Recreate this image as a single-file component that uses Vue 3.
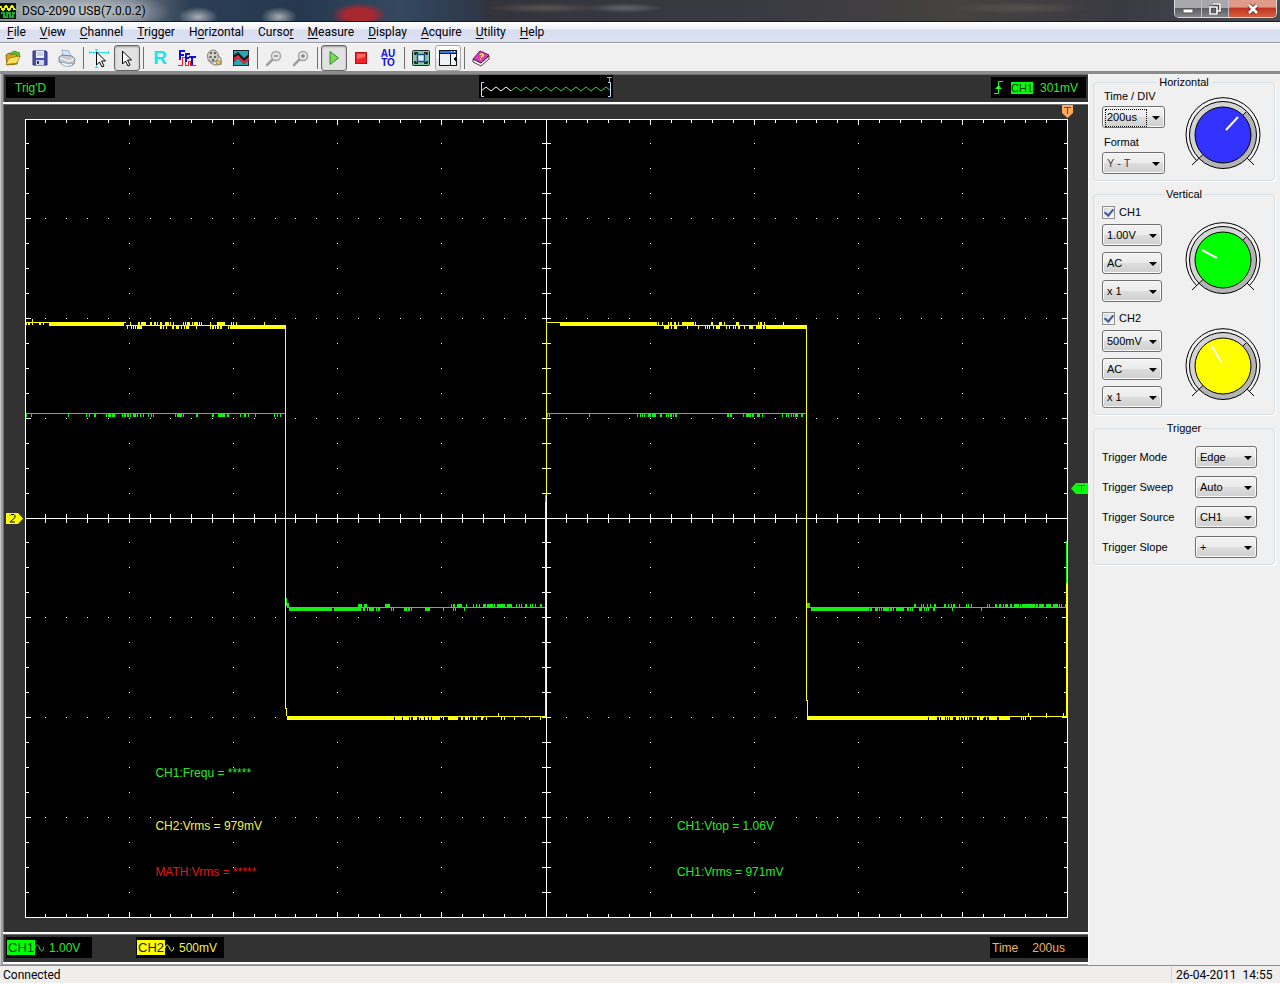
<script setup>
import { ref } from 'vue'

const menus = [
  ['', 'F', 'ile'], ['', 'V', 'iew'], ['', 'C', 'hannel'], ['', 'T', 'rigger'],
  ['H', 'o', 'rizontal'], ['Curso', 'r', ''], ['', 'M', 'easure'], ['', 'D', 'isplay'],
  ['', 'A', 'cquire'], ['', 'U', 'tility'], ['', 'H', 'elp'],
]

const horizontal = [
  { id: 'time-div', label: 'Time / DIV', value: '200us', focused: true },
  { id: 'format', label: 'Format', value: 'Y - T', muted: true },
]
const channels = ref([
  { name: 'CH1', on: true, settings: ['1.00V', 'AC', 'x 1'] },
  { name: 'CH2', on: true, settings: ['500mV', 'AC', 'x 1'] },
])
const settingNames = ['scale', 'coupling', 'probe']
const trigger = [
  { id: 'trigger-mode', label: 'Trigger Mode', value: 'Edge' },
  { id: 'trigger-sweep', label: 'Trigger Sweep', value: 'Auto' },
  { id: 'trigger-source', label: 'Trigger Source', value: 'CH1' },
  { id: 'trigger-slope', label: 'Trigger Slope', value: '+' },
]
const knobs = {
  time: { fill: '#3333ff', hand: 'M3 -5L15 -18' },
  ch1: { fill: '#00ff00', hand: 'M-21 -10L-6 -2' },
  ch2: { fill: '#ffff00', hand: 'M-11 -20L-2 -4' },
}

// Plot area: ten divisions across, eight down.
const X0 = 25, Y0 = 119, W = 1042, H = 798
const box = (x, y, w, h) => `M${x} ${y}h${w}v${h}h${-w}z`
const gx = (i) => Math.floor(X0 + (W * i) / 50)
const gy = (i) => Math.floor(Y0 + (H * i) / 32)

function graticule() {
  let d = box(X0, Y0, W + 1, 1) + box(X0, Y0 + H, W + 1, 1) + box(X0, Y0, 1, H + 1) + box(X0 + W, Y0, 1, H + 1)
  d += box(X0, 518, W, 1) + box(546, Y0, 1, H)
  for (let i = 1; i < 50; i++) {
    const n = i % 5 ? 4 : 6
    d += box(gx(i), Y0, 1, n) + box(gx(i), Y0 + H - n + 1, 1, n) + box(gx(i), 514, 1, 9)
    for (let j = 4; j < 32; j += 4) d += box(gx(i), gy(j), 1, 1)
  }
  for (let j = 1; j < 32; j++) {
    const n = j % 4 ? 4 : 6
    d += box(X0, gy(j), n, 1) + box(X0 + W - n + 1, gy(j), n, 1) + box(542, gy(j), 9, 1)
    for (let i = 5; i < 50; i += 5) d += box(gx(i), gy(j), 1, 1)
  }
  return d
}

// Quantisation noise: [from, to, density] runs of one-sample spikes.
let seed = 7
const rnd = () => (seed = (seed * 16807) % 2147483647) / 2147483647
const noise = (y, runs, h = 3) => {
  let d = ''
  for (const [a, b, p] of runs) {
    if (p === 1) { d += box(a, y, b - a, h + 1); continue }
    for (let x = a; x < b; x++) if (rnd() < p) d += box(x, y, 1, h)
  }
  return d
}

const yellow =
  box(26, 322, 100, 1) + noise(323, [[26, 29, 0.8], [29, 44, 0.4]], 2) + noise(322, [[49, 124, 1]]) + box(32, 319, 1, 3) +
  box(126, 325, 159, 1) + noise(322, [[126, 158, 0.45], [160, 202, 0.42], [208, 216, 0.4], [217, 225, 0.85], [228, 237, 0.25]]) +
  noise(326, [[126, 133, 0.25], [133, 143, 0.6], [157, 190, 0.45], [190, 208, 0.15], [208, 230, 0.5]]) + noise(325, [[230, 286, 1]]) + box(264, 322, 1, 3) +
  box(285, 325, 1, 384) + box(286, 708, 1, 8) + box(287, 716, 258, 1) + noise(716, [[287, 392, 1]]) +
  noise(717, [[392, 408, 0.8], [408, 450, 0.6], [450, 470, 0.8], [470, 488, 0.55], [488, 545, 0.08]]) + box(498, 713, 1, 3) +
  box(546, 322, 1, 174) + box(545, 502, 1, 215) + box(546, 322, 14, 1) + noise(322, [[560, 657, 1]]) +
  box(656, 325, 150, 1) + noise(322, [[657, 676, 0.5], [678, 697, 0.6], [700, 726, 0.25], [736, 740, 0.4], [757, 766, 0.55]]) + box(783, 322, 1, 3) +
  noise(326, [[664, 677, 0.75], [687, 690, 0.3], [697, 717, 0.6], [717, 767, 0.45]]) + noise(325, [[767, 807, 1]]) +
  box(806, 325, 1, 376) + box(807, 700, 1, 16) + box(807, 716, 260, 1) + noise(716, [[807, 926, 1]]) +
  noise(717, [[926, 945, 0.75], [945, 990, 0.6], [990, 1010, 0.75], [1010, 1035, 0.15]]) +
  box(1028, 713, 1, 3) + box(1046, 713, 1, 3) + box(1063, 713, 1, 3) + box(1066, 583, 1, 134)

const green =
  box(26, 413, 260, 1) + noise(414, [[26, 32, 0.7], [68, 69, 0.9], [86, 96, 0.3], [106, 117, 0.7], [120, 138, 0.55], [138, 160, 0.2], [175, 184, 0.5], [196, 198, 0.7], [211, 231, 0.65], [239, 247, 0.7], [248, 256, 0.3], [274, 285, 0.3]]) +
  box(285, 598, 2, 8) + box(287, 603, 2, 5) + box(287, 607, 258, 1) + noise(607, [[289, 332, 1]]) +
  noise(608, [[332, 364, 0.85], [364, 380, 0.4], [386, 397, 0.2], [404, 416, 0.6], [424, 430, 0.5], [436, 470, 0.08]]) +
  noise(604, [[352, 367, 0.25], [377, 390, 0.55], [412, 416, 0.3], [451, 464, 0.6], [464, 480, 0.1], [482, 505, 0.85], [505, 536, 0.45], [540, 545, 0.3]]) +
  box(545, 495, 1, 7) + box(547, 413, 259, 1) +
  noise(414, [[547, 550, 0.9], [588, 590, 0.6], [630, 648, 0.25], [648, 656, 0.8], [660, 678, 0.3], [715, 717, 0.4], [727, 735, 0.5], [742, 764, 0.65], [776, 804, 0.35]]) +
  box(806, 596, 1, 12) + box(807, 603, 3, 5) + box(807, 607, 259, 1) + noise(607, [[811, 868, 1]]) +
  noise(608, [[868, 892, 0.85], [892, 914, 0.5], [918, 937, 0.45], [950, 985, 0.1]]) +
  noise(604, [[914, 938, 0.45], [944, 974, 0.35], [986, 1005, 0.5], [1005, 1048, 0.85], [1048, 1066, 0.6]]) +
  box(1066, 541, 1, 42)

const grid = graticule()

const previewWave = (from, to) => {
  let d = ''
  for (let i = from; i <= to; i++) d += `${i === from ? 'M' : 'L'}${2 + i * 5} ${i % 2 ? 12 : 16}`
  return d
}

const readings = [
  { text: 'CH1:Frequ = *****', tone: 'green' }, null,
  { text: 'CH2:Vrms = 979mV', tone: 'yellow' }, { text: 'CH1:Vtop = 1.06V', tone: 'green' },
  { text: 'MATH:Vrms = *****', tone: 'red' }, { text: 'CH1:Vrms = 971mV', tone: 'green' },
]
</script>

<template>
  <div class="window">
    <header class="titlebar">
      <svg class="app-icon" width="16" height="16" viewBox="0 0 16 16" shape-rendering="crispEdges" aria-hidden="true">
        <rect width="16" height="16" fill="#0a1a08" />
        <path d="M0 3L3 7L6 3L9 7L12 3L15 7" fill="none" stroke="#f4f000" stroke-width="2" />
        <path d="M1 10h3v4h3v-4h3v4h3v-4h2" fill="none" stroke="#12a83a" stroke-width="2" />
      </svg>
      <h1>DSO-2090 USB(7.0.0.2)</h1>
      <div class="win-buttons">
        <button class="min" aria-label="Minimize">
          <svg width="12" height="12" viewBox="0 0 12 12"><rect x="1" y="6" width="10" height="4" fill="#fff" stroke="#555" /></svg>
        </button>
        <button class="max" aria-label="Restore">
          <svg width="12" height="12" viewBox="0 0 12 12"><path d="M4 1h7v7h-3M1 4h7v7h-7z" fill="none" stroke="#444" stroke-width="3" /><path d="M4 1h7v7h-3M1 4h7v7h-7z" fill="none" stroke="#fff" stroke-width="1.6" /></svg>
        </button>
        <button class="close" aria-label="Close">
          <svg width="12" height="12" viewBox="0 0 12 12"><path d="M2 2L10 10M10 2L2 10" stroke="#5a2a24" stroke-width="4.4" /><path d="M2 2L10 10M10 2L2 10" stroke="#fff" stroke-width="2.8" /></svg>
        </button>
      </div>
    </header>

    <nav class="menubar">
      <button v-for="m in menus" :key="m.join('')">{{ m[0] }}<u>{{ m[1] }}</u>{{ m[2] }}</button>
    </nav>

    <div class="toolbar" role="toolbar">
      <button aria-label="Open">
        <svg width="18" height="18" viewBox="0 0 18 18"><path d="M2 6l3-2 3 1 5-1 1 3-1 8-10 1z" fill="#d8a520" stroke="#8a6a10" /><path d="M6 5c2-3 6-4 8-1l1-1 1 5-4-1 1-1c-2-2-4-1-6 0z" fill="#5cc832" stroke="#2d7a18" stroke-width=".7" /><path d="M2 15.500L5 9l11-2-3 7z" fill="#ffe25a" stroke="#9a7812" stroke-width=".8" /></svg>
      </button>
      <button aria-label="Save">
        <svg width="18" height="18" viewBox="0 0 18 18"><path d="M2 2h13l1 1v13h-14z" fill="#4a4fa8" stroke="#2e327c" /><rect x="5" y="2" width="8" height="7" fill="#eef0fa" /><path d="M6 4h6M6 6h6" stroke="#a8acd0" /><rect x="5" y="11" width="8" height="5" fill="#d4d6ea" /><rect x="6" y="12" width="2" height="3" fill="#34387c" /></svg>
      </button>
      <button aria-label="Print">
        <svg width="18" height="18" viewBox="0 0 18 18"><path d="M5 7L4 1l7 1 2 6z" fill="#d4e8fa" stroke="#86a4c4" stroke-width=".8" /><path d="M1 8l3-2 10 1 3 3-1 5-5 2-10-4z" fill="#c8ccd2" stroke="#6c7078" stroke-width=".8" /><path d="M2 9l9 3 5-2" fill="none" stroke="#fff" /><path d="M4 13l7 2 3-1 1 2-6 2-6-3z" fill="#f4f8fc" stroke="#6c88a8" stroke-width=".7" /></svg>
      </button>
      <i class="sep"></i>
      <button aria-label="Cursor cross">
        <svg width="22" height="20" viewBox="0 0 22 20"><path d="M0 4.500H20M7.500 1V20M.5 3v3M19.500 3v3M6 1.500h3M6 19.500h3" stroke="#28e0e8" /><path d="M7.500 4v13l3-3 2.500 5 2-1-2.500-5h4z" fill="#fff" stroke="#000" /></svg>
      </button>
      <button class="pressed" aria-label="Pointer">
        <svg width="18" height="20" viewBox="0 0 18 20"><path d="M4.500 3v13l3-3 2.500 5 2-1-2.500-5h4z" fill="#fff" stroke="#000" /></svg>
      </button>
      <i class="sep"></i>
      <button class="glyph-r" aria-label="Reference">R</button>
      <button aria-label="FFT">
        <svg width="18" height="18" viewBox="0 0 18 18" shape-rendering="crispEdges"><path d="M0 16.500h4v-8h3v8h3v-4h2v4h6" fill="none" stroke="#f02020" /><path d="M2 11V2h5M2 6h4M8 13V5h4M8 9h3M11 8h7M14 8v8" fill="none" stroke="#1010d8" stroke-width="2" /></svg>
      </button>
      <button aria-label="Record">
        <svg width="18" height="18" viewBox="0 0 18 18"><ellipse cx="8" cy="7" rx="5.500" ry="6" fill="#d8d8d0" stroke="#808078" /><g fill="#686860"><circle cx="6" cy="4" r="1.300" /><circle cx="10" cy="4" r="1.300" /><circle cx="5.500" cy="8" r="1.300" /><circle cx="10" cy="8" r="1.300" /><circle cx="8" cy="11" r="1.300" /></g><path d="M12 6c4 2 5 6 4 9l-6 1c-3-1-6-3-7-6" fill="none" stroke="#a09c88" stroke-width="1.500" /><ellipse cx="13.500" cy="13.500" rx="2.500" ry="2" fill="#e8c460" stroke="#806828" stroke-width=".6" /></svg>
      </button>
      <button aria-label="Pass or fail">
        <svg width="18" height="18" viewBox="0 0 18 18"><rect x="1.500" y="1.500" width="15" height="15" fill="#28a8b0" stroke="#182830" /><path d="M2 6l4-3 6 6 5-4v6l-5 4-6-6-4 4z" fill="#14181c" /><path d="M2 9l4-3 6 6 5-4v3l-5 4-6-6-4 3z" fill="#e82840" /></svg>
      </button>
      <i class="sep"></i>
      <button aria-label="Zoom out">
        <svg width="18" height="18" viewBox="0 0 18 18"><path d="M8 10L2 16" stroke="#a0a0a0" stroke-width="2.500" stroke-linecap="round" /><circle cx="11" cy="7" r="4.500" fill="#e8e8e8" stroke="#a4a4a4" stroke-width="1.500" /><path d="M9 7h4" stroke="#808080" stroke-width="1.400" /></svg>
      </button>
      <button aria-label="Zoom in">
        <svg width="18" height="18" viewBox="0 0 18 18"><path d="M8 10L2 16" stroke="#a0a0a0" stroke-width="2.500" stroke-linecap="round" /><circle cx="11" cy="7" r="4.500" fill="#e8e8e8" stroke="#a4a4a4" stroke-width="1.500" /><path d="M9 7h4M11 5v4" stroke="#808080" stroke-width="1.400" /></svg>
      </button>
      <i class="sep"></i>
      <button class="pressed" aria-label="Start">
        <svg width="18" height="18" viewBox="0 0 18 18"><path d="M5 2.500L13.500 9L5 15.500z" fill="#7cd860" stroke="#2c8c20" /></svg>
      </button>
      <button aria-label="Stop">
        <svg width="18" height="18" viewBox="0 0 18 18"><rect x="3.500" y="3.500" width="11" height="11" fill="#f02424" stroke="#b81010" /><path d="M5 5h8v3l-8 2z" fill="#ff6a60" /></svg>
      </button>
      <button class="glyph-auto" aria-label="Auto set"><span>AU</span><span>TO</span></button>
      <i class="sep"></i>
      <button aria-label="Full screen">
        <svg width="18" height="18" viewBox="0 0 18 18"><rect x=".5" y="1.500" width="17" height="15" rx="1" fill="#88c4a8" stroke="#182c28" /><path d="M3 6V4h3M12 4h3v2M15 12v2h-3M6 14H3v-2" fill="none" stroke="#000" stroke-width="1.400" /><rect x="5.500" y="5.500" width="7" height="7" fill="#d8f0ff" stroke="#1c4c8c" stroke-width="1.500" /></svg>
      </button>
      <button class="framed" aria-label="Side panel">
        <svg width="18" height="18" viewBox="0 0 18 18" shape-rendering="crispEdges"><rect x="0" y="1" width="18" height="16" fill="#10181c" /><rect x="1" y="2" width="16" height="2" fill="#3878e0" /><path d="M12 2h1v1h-1zM15 2h1v1h-1z" fill="#fff" /><path d="M1 5h10v11h-10zM12 5h5v11h-5z" fill="#f0f2f6" /><path d="M17 7v6l-3-3z" fill="#000" /></svg>
      </button>
      <i class="sep"></i>
      <button aria-label="Help">
        <svg width="18" height="18" viewBox="0 0 18 18"><path d="M1 10l8 4 8-7v3l-8 7-8-4z" fill="#fff" stroke="#501838" stroke-width=".9" /><path d="M1 10L8 2l9 4-8 8z" fill="#d83cc0" stroke="#601450" /><path d="M8 6c1-2 4-1 3 1l-2 1M8 10h1" fill="none" stroke="#ffe840" stroke-width="1.400" /></svg>
      </button>
    </div>

    <div class="body">
      <main class="scope">
        <section class="strip top">
          <div><span class="lcd state">Trig'D</span></div>
          <svg class="preview" width="134" height="23" viewBox="0 0 134 23">
            <rect width="134" height="23" fill="#000" />
            <path :d="previewWave(0, 6)" fill="none" stroke="#fff" />
            <path :d="previewWave(6, 26)" fill="none" stroke="#2fd04f" />
            <path d="M5 7.500H2.500V21.500H5M129 7.500H131.500V21.500H129" fill="none" stroke="#c4d8ff" />
            <path d="M128 2.500h5M130.500 2v5" stroke="#e09a60" />
          </svg>
          <div class="right">
            <span class="lcd level">
              <svg width="10" height="15" viewBox="0 0 10 15"><path d="M0 13.500H4.500V1.500H9" fill="none" stroke="#20ff20" /><path d="M1 9L4.500 5L8 9z" fill="#20ff20" /></svg>
              <b class="tag small">CH1</b>
              <span>301mV</span>
            </span>
          </div>
        </section>

        <section class="plot">
          <svg class="screen" viewBox="25 119 1043 799" preserveAspectRatio="none" shape-rendering="crispEdges" role="img" aria-label="Waveforms">
            <rect x="25" y="119" width="1043" height="799" fill="#000" />
            <path :d="grid" fill="#fff" />
            <path :d="green" fill="#12f012" />
            <path :d="yellow" fill="#ffff10" />
          </svg>
          <div class="readings">
            <template v-for="(r, i) in readings" :key="i">
              <span v-if="r" :class="r.tone">{{ r.text }}</span><span v-else></span>
            </template>
          </div>
          <div class="marker pos"><svg width="12" height="13" viewBox="0 0 12 13"><path d="M0 0h11v8l-5.500 5L0 8z" fill="#ffa860" /><path d="M2 2.500h7M5.500 2v7" stroke="#7a4420" /></svg></div>
          <div class="marker ground"><svg width="17" height="11" viewBox="0 0 17 11"><path d="M0 0h12l5 5.500L12 11H0z" fill="#ffff00" /><path d="M4 2.500l1-1h3l1 1v2l-5 4.500h5" fill="none" stroke="#000" /></svg></div>
          <div class="marker trig"><svg width="17" height="11" viewBox="0 0 17 11"><path d="M17 0H5L0 5.500L5 11h12z" fill="#00ff00" /><path d="M7 2.500h7M10.500 2v7" stroke="#106010" /></svg></div>
        </section>

        <section class="strip bottom">
          <span class="lcd ch one">
            <b class="tag">CH1</b>
            <svg width="9" height="10" viewBox="0 0 9 10"><path d="M0 5C1 1 3 1 4.500 5S8 9 9 4" fill="none" stroke="#30f030" /></svg>
            <span>1.00V</span>
          </span>
          <span class="lcd ch two">
            <b class="tag yellow-tag">CH2</b>
            <svg width="9" height="10" viewBox="0 0 9 10"><path d="M0 5C1 1 3 1 4.500 5S8 9 9 4" fill="none" stroke="#f8f870" /></svg>
            <span>500mV</span>
          </span>
          <span class="lcd time"><span>Time</span><span>200us</span></span>
        </section>
      </main>

      <aside class="panel">
        <fieldset>
          <legend>Horizontal</legend>
          <div class="split">
            <div class="stack timebase">
              <template v-for="h in horizontal" :key="h.id">
                <label :for="h.id">{{ h.label }}</label>
                <span class="combo" :class="{ focused: h.focused, muted: h.muted }"><select :id="h.id"><option>{{ h.value }}</option></select></span>
              </template>
            </div>
            <div class="knob-cell">
              <svg class="knob" width="76" height="76" viewBox="-38 -38 76 76">
                <path d="M-26 26A37 37 0 1 1 26 26" fill="none" stroke="#000" />
                <circle r="33.500" fill="#b4b4b4" /><path d="M-23.700 23.700A33.500 33.500 0 0 1 23.700 -23.700z" fill="#d4d4d4" />
                <circle r="33.500" fill="none" stroke="#000" />
                <path d="M-31 30L-20 19.500M24 23L31 30M20 -20L23 -23" stroke="#000" />
                <circle r="28" :fill="knobs.time.fill" stroke="#000" /><path :d="knobs.time.hand" stroke="#fff" stroke-width="2" />
              </svg>
            </div>
          </div>
        </fieldset>

        <fieldset>
          <legend>Vertical</legend>
          <div v-for="(c, i) in channels" :key="c.name" class="split channel">
            <div class="stack">
              <label class="check"><input v-model="c.on" type="checkbox" /><span>{{ c.name }}</span></label>
              <span v-for="(s, k) in c.settings" :key="k" class="combo"><select :aria-label="c.name + ' ' + settingNames[k]"><option>{{ s }}</option></select></span>
            </div>
            <div class="knob-cell">
              <svg class="knob" width="76" height="76" viewBox="-38 -38 76 76">
                <path d="M-26 26A37 37 0 1 1 26 26" fill="none" stroke="#000" />
                <circle r="33.500" fill="#b4b4b4" /><path d="M-23.700 23.700A33.500 33.500 0 0 1 23.700 -23.700z" fill="#d4d4d4" />
                <circle r="33.500" fill="none" stroke="#000" />
                <path d="M-31 30L-20 19.500M24 23L31 30M20 -20L23 -23" stroke="#000" />
                <circle r="28" :fill="i ? knobs.ch2.fill : knobs.ch1.fill" stroke="#000" /><path :d="i ? knobs.ch2.hand : knobs.ch1.hand" stroke="#fff" stroke-width="2" />
              </svg>
            </div>
          </div>
        </fieldset>

        <fieldset>
          <legend>Trigger</legend>
          <div class="rows">
            <div v-for="t in trigger" :key="t.id" class="row">
              <label :for="t.id">{{ t.label }}</label>
              <span class="combo"><select :id="t.id"><option>{{ t.value }}</option></select></span>
            </div>
          </div>
        </fieldset>
      </aside>
    </div>

    <footer class="status">
      <span>Connected</span>
      <time>26-04-2011&nbsp; 14:55</time>
    </footer>
  </div>
</template>

<style>
body { margin: 0; background: #f0f0f0; }
</style>

<style scoped>
* { box-sizing: border-box; }
.window {
  display: flex; flex-direction: column; min-height: 100vh;
  font: 12px/16px Roboto, "Noto Sans", sans-serif; color: #000; background: #f0f0f0;
}
button { font: inherit; color: inherit; border: 0; background: none; padding: 0; }
svg { display: block; }

.titlebar {
  display: flex; align-items: center; height: 22px; border-bottom: 1px solid #16181e; overflow: hidden;
  background:
    radial-gradient(ellipse 90px 22px at 80px 12px, rgba(190, 196, 200, .95), rgba(160, 168, 176, .7) 60%, transparent),
    radial-gradient(ellipse 20px 10px at 198px 17px, #aab0b8, transparent),
    radial-gradient(ellipse 18px 10px at 279px 17px, #a8acb0, transparent),
    radial-gradient(ellipse 28px 12px at 359px 15px, #a82830 50%, transparent),
    radial-gradient(ellipse 60px 5px at 545px 8px, #5a5450, transparent),
    radial-gradient(ellipse 40px 5px at 625px 8px, #62646c, transparent),
    radial-gradient(ellipse 70px 6px at 1020px 8px, #565250, transparent),
    linear-gradient(90deg, #8a949c 0, #6c7884 130px, #2c3e54 190px, #25384e 300px, #34485e 400px, #2e3a4c 470px, #33333b 490px, #3a3a42 760px, #45423f 960px, #3a3a42 1120px, #4a4c54);
}
.titlebar h1 { flex: 1; margin: 0 0 0 6px; font-size: 12px; font-weight: 400; line-height: 16px; text-shadow: 0 0 6px #dfe3e6; }
.win-buttons { display: flex; align-self: flex-start; margin-right: 3px; height: 18px; border: 1px solid #d8d8dc; border-top: 0; border-radius: 0 0 5px 5px; overflow: hidden; }
.win-buttons button { display: flex; align-items: center; justify-content: center; width: 27px; border-right: 1px solid #c0c0c4; background: linear-gradient(#a8a8ac 45%, #5c5c62 50%, #84848a); }
.win-buttons .close { width: 47px; border-right: 0; background: linear-gradient(#e09a8a 40%, #c03420 50%, #d8603c); }

.menubar { display: flex; align-items: center; gap: 14px; height: 21px; padding: 0 0 0 7px; border-bottom: 1px solid #9a9aa4; background: linear-gradient(#fff 0, #eef0f8 35%, #d8def0 40%, #dde2f4); }
.menubar u { text-underline-offset: 2px; }

.toolbar { display: flex; align-items: center; gap: 1px; height: 29px; border-top: 1px solid #fff; border-bottom: 1px solid #8c8c8c; background: #f0f0f0; }
.toolbar button { display: flex; align-items: center; justify-content: center; width: 26px; height: 26px; border: 1px solid transparent; border-radius: 3px; }
.toolbar .pressed { border-color: #686868; background: #e2e2e2; box-shadow: inset 0 1px 2px #999; }
.toolbar .framed { border-color: #a8a8a8; background: linear-gradient(#fcfcfc 50%, #e8e8e8 50%); }
.toolbar .sep { width: 5px; height: 22px; background: linear-gradient(#707070, #707070) center / 1px 100% no-repeat; }
.toolbar .glyph-r { color: #10e8f0; font: 700 19px/20px "Liberation Sans", Arial, sans-serif; }
.toolbar .glyph-auto { flex-direction: column; color: #1010d8; font: 700 10px/9px "Liberation Sans", Arial, sans-serif; }

.body { display: flex; flex: 1; border-top: 2px solid #8c8c8c; }
.scope { flex: 1; min-width: 0; display: flex; flex-direction: column; padding: 0 0 1px 2px; border-left: 1px solid #c8c8c8; background: #a0a0a0; font: 12px/16px "Liberation Sans", Arial, sans-serif; }
.strip { border: solid #6c6c6c; border-width: 1px 0 0 1px; background: #323232; box-shadow: 0 2px #fff; height: 28px; margin-bottom: 2px; }
.strip.top { display: grid; grid-template-columns: 1fr auto 1fr; }
.strip.top > div { padding: 2px 2px 0; display: flex; }
.strip.top > .right { justify-content: flex-end; }
.lcd { display: flex; align-items: center; height: 21px; background: #000; color: #2ce82c; font-size: 12px; }
.state { padding: 0 9px; }
.level { gap: 7px; padding: 0 8px 0 3px; }
.tag { padding: 0 1px; background: #00ff00; color: #0a3c0a; font-weight: 400; font-size: 13px; line-height: 15px; }
.tag.small { padding: 0; font-size: 11px; line-height: 12px; }
.tag.yellow-tag { background: #ffff00; color: #202000; }

.plot { position: relative; flex: 1; display: flex; padding: 14px 20px 14px 21px; border: solid #6c6c6c; border-width: 1px 0 0 1px; background: #323232; box-shadow: 0 2px #fff; margin-bottom: 2px; }
.screen { flex: 1; width: 100%; min-width: 0; height: auto; min-height: 0; }
.readings { position: absolute; left: 21px; right: 20px; bottom: 51px; display: grid; grid-template-columns: 1fr 1fr; grid-template-rows: 53px 46px 18px; line-height: 18px; }
.readings span { padding-left: 25%; white-space: nowrap; }
.green { color: #2ce82c; }
.yellow { color: #f0f050; }
.red { color: #e01818; }
.marker { position: absolute; }
.marker.pos { top: 0; right: 14px; }
.marker.ground { left: 2px; top: 50%; margin-top: -6px; }
.marker.trig { right: 0; top: 46%; margin-top: -2px; }

.strip.bottom { display: flex; padding: 2px 0 0 2px; }
.ch > svg { margin: 0 5px 0 0; }
.ch { padding-left: 1px; }
.ch.one { width: 86px; margin-right: 44px; }
.ch.two { width: 88px; color: #f0f050; }
.lcd.time { width: 98px; gap: 14px; padding-left: 2px; margin-left: auto; color: #f0b060; }

.panel { width: 192px; padding: 2px 5px 0 4px; border-left: 1px solid #fff; background: #f0f0f0; font: 11px/13px "Liberation Sans", Arial, sans-serif; }
fieldset { margin: 0 0 7px; padding: 0 8px 6px; border: 1px solid #d5dfe5; border-radius: 4px; box-shadow: 1px 1px #fff; min-width: 0; }
legend { margin: 0 auto; padding: 0 2px; line-height: 13px; }
.split { display: flex; justify-content: space-between; }
.stack { display: flex; flex-direction: column; align-items: flex-start; gap: 6px; }
.timebase { gap: 3px; padding-top: 1px; }
.timebase label { padding-left: 2px; }
.timebase .combo { width: 63px; }
.timebase .combo + label { margin-top: 5px; }
.channel { padding-top: 5px; }
.channel + .channel { padding-top: 10px; }
.knob-cell { display: flex; align-items: flex-start; padding: 8px 5px 0 0; }
.channel .knob-cell { padding-top: 16px; }
.check { display: flex; align-items: center; gap: 4px; height: 12px; }
.check input { appearance: none; width: 13px; height: 13px; margin: 0; border: 1px solid #8e8f8f; background: linear-gradient(135deg, #d0d4da, #fff); box-shadow: inset 0 0 0 1px #f4f4f4; display: grid; place-items: center; }
.check input:checked::before { content: ""; width: 4px; height: 7px; margin-bottom: 2px; border: solid #4058a0; border-width: 0 2px 2px 0; transform: rotate(40deg); }
.combo { position: relative; display: block; width: 60px; height: 22px; }
.combo::after { content: ""; position: absolute; right: 5px; top: 10px; border: 4px solid transparent; border-top-color: #000; border-bottom: 0; pointer-events: none; }
.combo select { appearance: none; width: 100%; height: 100%; margin: 0; padding: 0 14px 0 4px; border: 1px solid #707070; border-radius: 3px; background: linear-gradient(#f3f3f3, #ebebeb 49%, #dddddd 50%, #cfcfcf); box-shadow: inset 0 0 0 1px #fafafa; color: #000; font: inherit; }
.combo.muted select { color: #404040; }
.combo.focused::before { content: ""; position: absolute; left: 3px; top: 3px; width: 40px; height: 16px; border: 1px dotted #000; pointer-events: none; }
.rows { display: grid; gap: 8px; padding-top: 11px; }
.row { display: flex; justify-content: space-between; align-items: center; padding-right: 9px; }
.row .combo { width: 62px; }

.status { display: flex; justify-content: space-between; align-items: center; height: 19px; padding-left: 3px; border-top: 1px solid #8c8c8c; border-bottom: 1px solid #fff; background: #f0eded; }
.status time { width: 109px; padding-left: 4px; border-left: 1px solid #d4d4d4; }
</style>
